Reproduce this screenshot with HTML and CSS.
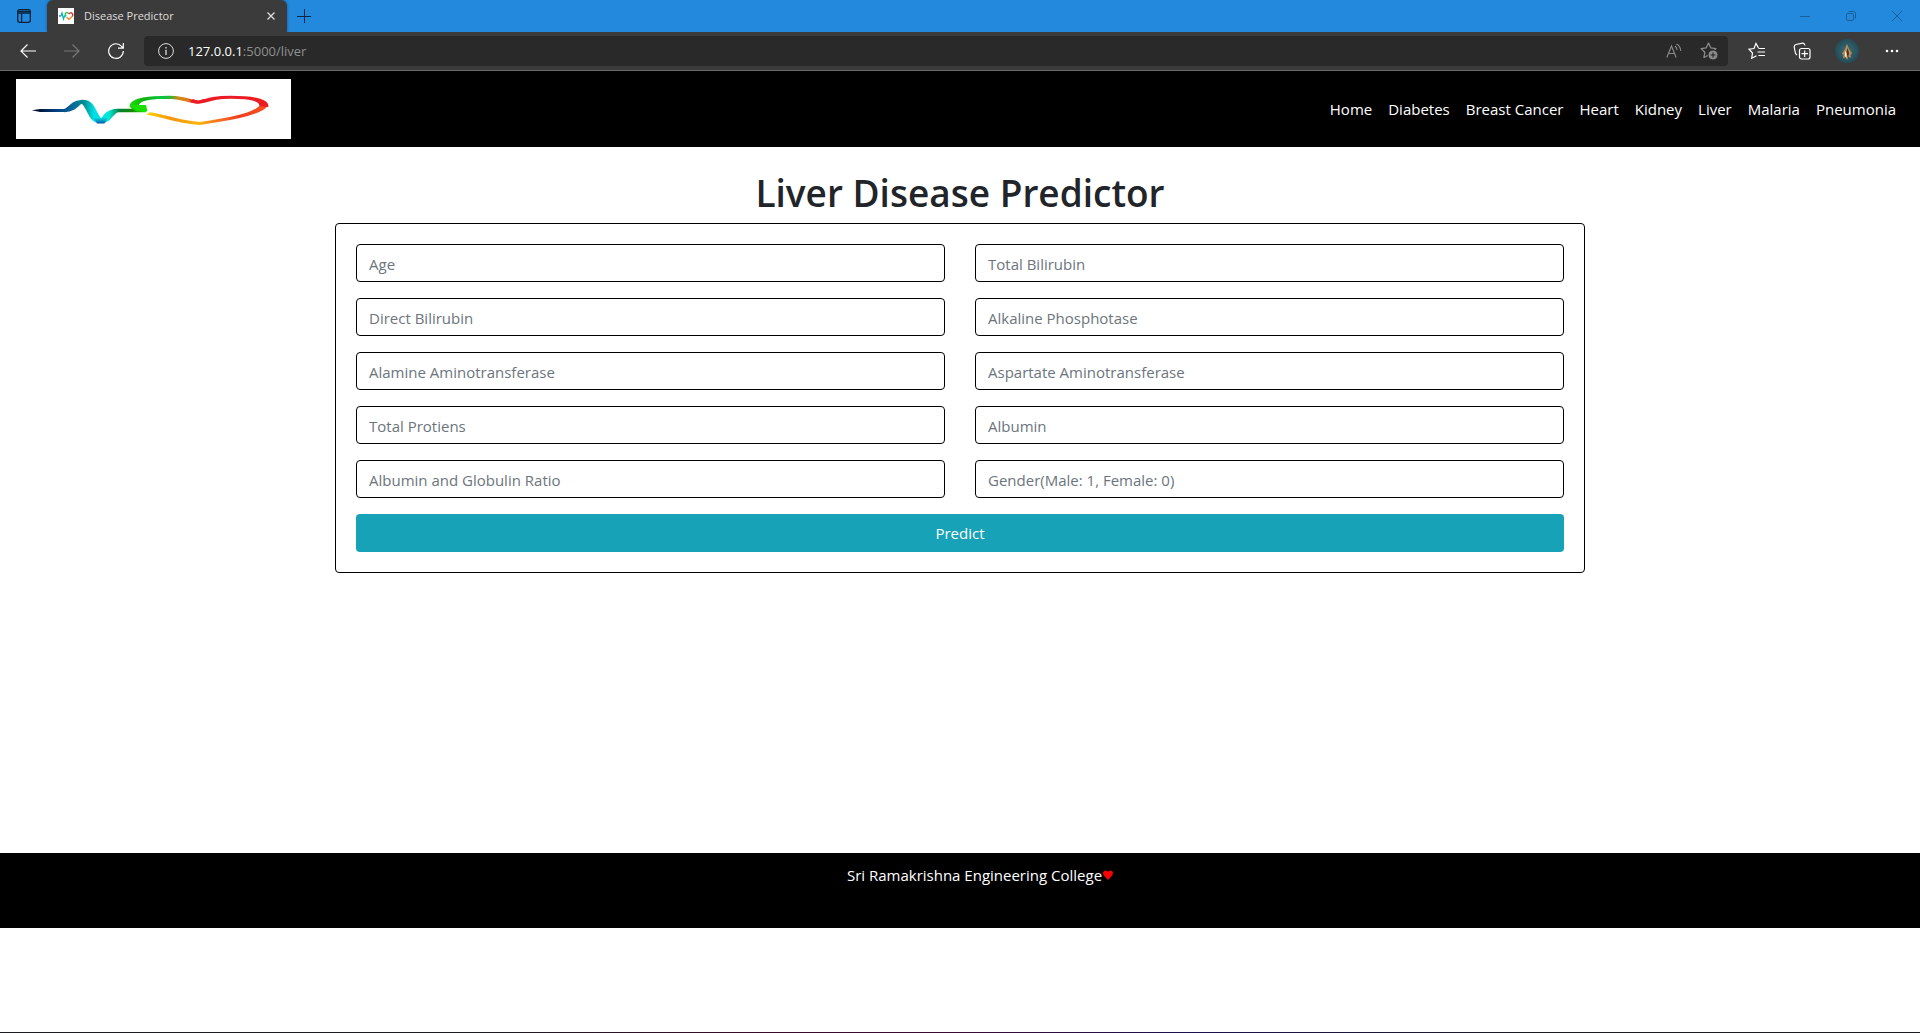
FILE: index.html
```html
<!DOCTYPE html>
<html lang="en">
<head>
<meta charset="utf-8">
<meta name="viewport" content="width=device-width, initial-scale=1">
<title>Disease Predictor</title>
<link rel="stylesheet" href="styles.css">
</head>
<body>
<svg class="defs" width="0" height="0" aria-hidden="true">
  <defs>
    <linearGradient id="pulse" gradientUnits="userSpaceOnUse" x1="5" y1="0" x2="43.300" y2="0">
      <stop offset="0" stop-color="#001"/><stop offset=".2" stop-color="#003a7a"/><stop offset=".33" stop-color="#0a5f98"/>
      <stop offset=".46" stop-color="#008c90"/><stop offset=".55" stop-color="#00e0e8"/><stop offset=".68" stop-color="#00e8d8"/>
      <stop offset=".77" stop-color="#00803a"/><stop offset=".88" stop-color="#178a00"/><stop offset="1" stop-color="#1cf000"/>
    </linearGradient>
    <linearGradient id="trough" x1="0" y1="0" x2="0" y2="1">
      <stop offset=".2" stop-color="#0060b0" stop-opacity="0"/><stop offset="1" stop-color="#0058a8"/>
    </linearGradient>
    <linearGradient id="heart-top" gradientUnits="userSpaceOnUse" x1="38" y1="0" x2="84" y2="0">
      <stop offset="0" stop-color="#18e000"/><stop offset=".1" stop-color="#12b012"/><stop offset=".24" stop-color="#00c840"/>
      <stop offset=".3" stop-color="#40b030"/><stop offset=".35" stop-color="#d08a10"/><stop offset=".42" stop-color="#e07a18"/>
      <stop offset=".46" stop-color="#ec1c24"/><stop offset="1" stop-color="#ec1c24"/>
    </linearGradient>
    <linearGradient id="heart-bottom" gradientUnits="userSpaceOnUse" x1="44" y1="0" x2="84" y2="0">
      <stop offset="0" stop-color="#ffd000"/><stop offset=".2" stop-color="#f5930f"/><stop offset=".42" stop-color="#fdb60c"/>
      <stop offset=".6" stop-color="#f86c20"/><stop offset=".75" stop-color="#f04020"/><stop offset="1" stop-color="#f85020"/>
    </linearGradient>
    <symbol id="logo" viewBox="0 0 275 60">
      <g transform="scale(3 1)" fill="none" stroke-width="3" stroke-linejoin="round">
        <path d="M5.300 31.300L8 30H17V33H8Z" fill="url(#pulse)"/>
        <path d="M16 31.500C19 31.500 19.500 23 22 22.500C25 22 25.500 42 28.300 42.500C30.500 42 30.500 32 34 31.500H43.500" stroke="url(#pulse)" stroke-width="3.300"/>
        <path d="M25.500 37Q28 40 31 37L29.500 44.500H27Z" fill="url(#trough)"/>
        <path d="M41.500 30.500C39.500 30 39 27 39.700 24.500C41 19.500 46 18.300 51 18.300C56 18.500 58 23 60.700 23C63.500 23 64 18.300 71.500 18.300C80 18.300 83 22 82.600 28" stroke="url(#heart-top)"/>
        <path d="M38.500 26H43.300L43.800 32H40Z" fill="#18e000"/>
        <path d="M59 20L60.700 22 62.500 20 64 21.500Q61 27 58 23Z" fill="#ec1c24"/>
        <path d="M44 34.500C49 36.500 55 43.500 61.300 44.500C69 41 80 36 82.300 27.500" stroke="url(#heart-bottom)" stroke-width="2.800"/>
      </g>
    </symbol>
    <symbol id="star" viewBox="0 0 16 16">
      <path d="M8 1L10.100 5.500 15 6.200 11.500 9.700 12.300 14.600 8 12.300 3.700 14.600 4.500 9.700 1 6.200 5.900 5.500Z" fill="none" stroke="currentColor" stroke-width="1.200" stroke-linejoin="round"/>
    </symbol>
    <radialGradient id="sea"><stop offset="0" stop-color="#3a6f78"/><stop offset="1" stop-color="#244c57"/></radialGradient>
  </defs>
</svg>

<header class="browser">
  <div class="tab-strip">
    <button class="chrome-button workspace" aria-label="Tab actions">
      <svg width="14" height="14" viewBox="0 0 14 14" fill="none" stroke="#0a2238" stroke-width="1.300"><rect x=".7" y=".7" width="12.600" height="12.600" rx="2"/><path d="M1 2.500H13M1 4.200H13M4.600 4V13"/></svg>
    </button>
    <div class="tab">
      <svg class="favicon" width="16" height="16" viewBox="0 0 16 16" fill="none"><path fill="#fff" d="M0 0H16V16H0Z"/><path d="M1 8H3" stroke="#124b8a" stroke-width="1.200"/><path d="M3 8L4 5 5.500 11 6.500 8H8" stroke="#0bb" stroke-width="1.300"/><path d="M8 8C6 5 9 3 11 6" stroke="#35c24a" stroke-width="1.300"/><path d="M11 6C13 3 16 6 14 8.500" stroke="#e23" stroke-width="1.300"/><path d="M14 8.500L11 11.500 8.500 9" stroke="#f82" stroke-width="1.300"/></svg>
      <span class="tab-title">Disease Predictor</span>
      <button class="chrome-button" aria-label="Close tab"><svg width="8" height="8" viewBox="0 0 8 8" stroke="#ddd" stroke-width="1.300"><path d="M.5.5L7.500 7.500M7.500.5L.5 7.500"/></svg></button>
    </div>
    <button class="chrome-button new-tab" aria-label="New tab"><svg width="14" height="14" viewBox="0 0 14 14" stroke="#082742"><path d="M7.500 0V14M0 7.500H14"/></svg></button>
    <div class="window-controls">
      <button class="chrome-button" aria-label="Minimize"><svg width="10" height="10" viewBox="0 0 10 10" stroke="#195f9c"><path d="M0 5.500H10"/></svg></button>
      <button class="chrome-button" aria-label="Restore"><svg width="10" height="10" viewBox="0 0 10 10" fill="none" stroke="#195f9c"><rect x=".5" y="2.500" width="7" height="7" rx="1.200"/><path d="M2.500.5H7.500Q9.500.5 9.500 2.500V7.500"/></svg></button>
      <button class="chrome-button" aria-label="Close"><svg width="10" height="10" viewBox="0 0 10 10" stroke="#195f9c"><path d="M0 0L10 10M10 0L0 10"/></svg></button>
    </div>
  </div>
  <div class="toolbar">
    <div class="history">
      <button class="chrome-button" aria-label="Back"><svg width="16" height="14" viewBox="0 0 16 14" fill="none" stroke="#fff" stroke-width="1.200"><path d="M16 7H1M7.500.5L1 7 7.500 13.500"/></svg></button>
      <button class="chrome-button" aria-label="Forward"><svg width="16" height="14" viewBox="0 0 16 14" fill="none" stroke="#777" stroke-width="1.200"><path d="M0 7H15M8.500.5L15 7 8.500 13.500"/></svg></button>
      <button class="chrome-button" aria-label="Refresh"><svg width="16" height="16" viewBox="0 0 16 16" fill="none" stroke="#fff" stroke-width="1.200"><path d="M15.300 8A7.300 7.300 0 1 1 13.700 3.500L15 5M15.300 0V5.200H10"/></svg></button>
    </div>
    <div class="address">
      <svg width="16" height="16" viewBox="0 0 16 16" fill="none" stroke="#ddd"><circle cx="8" cy="8" r="7.400"/><path d="M8 6.800V12M8 4V5.500" stroke-width="1.300"/></svg>
      <span class="url"><b>127.0.0.1</b>:5000/liver</span>
      <button class="chrome-button" aria-label="Read aloud"><svg width="16" height="16" viewBox="0 0 16 16" fill="none" stroke="#8b8b8b" stroke-width="1.100"><path d="M.8 14.500L5.500 3 10.200 14.500M2.500 10.500H8.600M9 3Q11 4.500 11 7M10.500 1Q14.500 3 14.800 8"/></svg></button>
      <button class="chrome-button" aria-label="Add to favorites"><svg width="18" height="18" viewBox="0 0 18 18" color="#8b8b8b"><use href="#star" width="17" height="17"/><circle cx="13" cy="13" r="5" fill="#8b8b8b" stroke="#292929"/><path d="M13 10.500V15.500M10.500 13H15.500" stroke="#292929" stroke-width="1.200"/></svg></button>
    </div>
    <div class="tools">
      <button class="chrome-button" aria-label="Favorites"><svg width="18" height="18" viewBox="0 0 18 18" fill="none" stroke="#fff" stroke-width="1.200"><path d="M10.500 6L8 1.500 6 6.500 1 7.200 4.500 11 3.700 16.200 8.500 13.700M10.500 6.500H17M9.500 10H17M10.500 13.500H17"/></svg></button>
      <button class="chrome-button" aria-label="Collections"><svg width="18" height="18" viewBox="0 0 18 18" fill="none" stroke="#fff" stroke-width="1.200"><rect x="6.500" y="6.500" width="10.500" height="10.500" rx="2"/><path d="M11.700 8.500V15M8.500 11.700H15M4 13L2.500 11.500 1.200 5Q1 3 3 2.500L9.500 1.200Q11.500 1 12 3.500"/></svg></button>
      <button class="chrome-button" aria-label="Profile"><svg width="24" height="24" viewBox="0 0 24 24"><circle cx="12" cy="12" r="12" fill="url(#sea)"/><path d="M12 5L14 10 17 14 15.500 16 16 19 13.500 17.500 12 21 10.500 18 8 19.500 8.500 16 7 14.500 10 10Z" fill="#b98a58"/><path d="M12.500 9L14 14 13 19 11.500 14Z" fill="#4b2d18"/><path d="M10 12L11.500 14 11.500 19 10 17Z" fill="#f4eee4"/></svg></button>
      <button class="chrome-button" aria-label="Settings and more"><svg width="14" height="4" viewBox="0 0 14 4" fill="#fff"><circle cx="2" cy="2" r="1.300"/><circle cx="7" cy="2" r="1.300"/><circle cx="12" cy="2" r="1.300"/></svg></button>
    </div>
  </div>
</header>

<div class="page">
  <nav class="navbar" aria-label="Main">
    <a class="brand" href="#" aria-label="Home page"><svg width="275" height="60"><use href="#logo"/></svg></a>
    <ul class="nav-list">
      <li><a href="#">Home</a></li>
      <li><a href="#">Diabetes</a></li>
      <li><a href="#">Breast Cancer</a></li>
      <li><a href="#">Heart</a></li>
      <li><a href="#">Kidney</a></li>
      <li><a href="#">Liver</a></li>
      <li><a href="#">Malaria</a></li>
      <li><a href="#">Pneumonia</a></li>
    </ul>
  </nav>
  <main class="content">
    <h1>Liver Disease Predictor</h1>
    <form class="card">
      <input type="text" aria-label="Age" placeholder="Age">
      <input type="text" aria-label="Total Bilirubin" placeholder="Total Bilirubin">
      <input type="text" aria-label="Direct Bilirubin" placeholder="Direct Bilirubin">
      <input type="text" aria-label="Alkaline Phosphotase" placeholder="Alkaline Phosphotase">
      <input type="text" aria-label="Alamine Aminotransferase" placeholder="Alamine Aminotransferase">
      <input type="text" aria-label="Aspartate Aminotransferase" placeholder="Aspartate Aminotransferase">
      <input type="text" aria-label="Total Protiens" placeholder="Total Protiens">
      <input type="text" aria-label="Albumin" placeholder="Albumin">
      <input type="text" aria-label="Albumin and Globulin Ratio" placeholder="Albumin and Globulin Ratio">
      <input type="text" aria-label="Gender (Male: 1, Female: 0)" placeholder="Gender(Male: 1, Female: 0)">
      <button class="predict" type="button">Predict</button>
    </form>
  </main>
  <footer class="footer">
    <p>Sri Ramakrishna Engineering College<svg class="love" width="10" height="10" viewBox="0 0 10 10" role="img" aria-label="love"><path d="M5 10L.8 5.200C-.8 2.500.5.500 2.400.500Q4.200.500 5 2Q5.800.500 7.600.500C9.500.500 10.800 2.500 9.200 5.200Z" fill="red"/></svg></p>
  </footer>
</div>
</body>
</html>
```
FILE: styles.css
```css
*, *::before, *::after { box-sizing: border-box; }

body {
  margin: 0;
  min-height: 100vh;
  display: flex;
  flex-direction: column;
  background: #fff;
  color: #212529;
  font: 15px/24px "Segoe UI", "Open Sans", "Noto Sans", sans-serif;
}

svg { display: block; flex: none; }
.defs { position: absolute; }

/* Browser frame */
.browser { border-bottom: 1px solid #6b6b6b; }

.chrome-button {
  display: grid;
  place-items: center;
  padding: 0;
  border: 0;
  background: none;
}

.tab-strip {
  display: flex;
  height: 32px;
  background: #2389dc;
}

.workspace { width: 47px; }

.tab {
  display: flex;
  align-items: center;
  width: 240px;
  padding: 0 12px 0 11px;
  border-radius: 6px 6px 0 0;
  background: #3b3b3b;
  color: #ddd;
  font-size: 11px;
  box-shadow: 0 0 3px #0006;
}

.tab-title { flex: 1; margin-left: 10px; }
.new-tab { width: 34px; }
.window-controls { display: flex; margin-left: auto; }
.window-controls .chrome-button { width: 46px; }

.toolbar {
  position: relative;
  display: flex;
  align-items: center;
  height: 38px;
  padding-right: 6px;
  background: #3b3b3b;
}

.history { display: flex; padding: 0 6px; }
.history .chrome-button { width: 44px; height: 30px; }

.address {
  flex: 1;
  display: flex;
  align-items: center;
  gap: 18px;
  height: 30px;
  padding: 0 10px 0 14px;
  border-radius: 4px;
  background: #292929;
  color: #8f8f8f;
}

.url { flex: 1; margin-left: -4px; font-size: 13px; }
.url b { color: #fff; font-weight: 400; }

.tools { display: flex; padding-left: 6px; }
.tools .chrome-button { width: 45px; height: 30px; }

/* Page */
.page { flex: 1; }

.navbar {
  display: flex;
  align-items: center;
  justify-content: space-between;
  padding: 8px 16px;
  background: #000;
}

.brand { background: #fff; }

.nav-list {
  display: flex;
  flex-wrap: wrap;
  margin: 0;
  padding: 0;
  list-style: none;
}

.nav-list a {
  display: block;
  padding: 8px;
  color: #fff;
  text-decoration: none;
}

.content {
  max-width: 1250px;
  margin: 0 auto;
  padding: 22px 0 280px;
}

h1 {
  margin: 0 0 6px;
  font-size: 37px;
  font-weight: 600;
  line-height: 48px;
  text-align: center;
}

.card {
  display: grid;
  grid-template-columns: 1fr 1fr;
  gap: 16px 30px;
  padding: 20px;
  border: 1px solid #000;
  border-radius: 4px;
}

.card input {
  min-width: 0;
  height: 38px;
  padding: 7px 12px 5px;
  border: 1px solid #000;
  border-radius: 4px;
  font: inherit;
}

.card input::placeholder { color: #6c757d; opacity: 1; }

.predict {
  grid-column: 1 / -1;
  height: 38px;
  border: 0;
  border-radius: 4px;
  background: #17a2b8;
  color: #fff;
  font: inherit;
}

.footer {
  min-height: 75px;
  padding: 10px 0 0 40px;
  background: #000;
  color: #fff;
}

.footer p {
  display: flex;
  align-items: center;
  justify-content: center;
  gap: 1px;
  margin: 0;
}

body::after {
  content: "";
  height: 1px;
  background: linear-gradient(90deg, #1b1b20 25%, #3a0a2a 40%, #3a0a35 50%, #1a1050 62%, #1b1b20 80%);
}
```
